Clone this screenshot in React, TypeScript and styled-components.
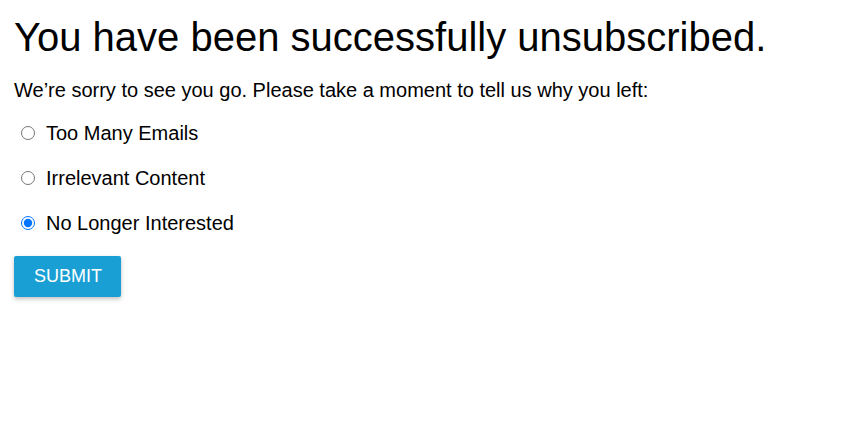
import React, { useState } from "react";
import styled, { createGlobalStyle } from "styled-components";

const GlobalStyle = createGlobalStyle`
  body {
    margin: 0;
    background: #ffffff;
    font-family: "Liberation Sans", Arial, sans-serif;
    color: #000000;
  }
`;

const Page = styled.div`
  padding: 14px 14px;
`;

const Title = styled.h1`
  margin: 0 0 18px 0;
  font-size: 40px;
  font-weight: normal;
  line-height: 46px;
`;

const Intro = styled.p`
  margin: 0 0 19px 0;
  font-size: 20px;
  line-height: 24px;
`;

const Options = styled.div`
  display: flex;
  flex-direction: column;
  gap: 21px;
  margin-bottom: 21px;
`;

const Option = styled.label`
  display: flex;
  align-items: center;
  font-size: 20px;
  line-height: 24px;
  cursor: pointer;
`;

const Radio = styled.input`
  margin: 0 11px 0 7px;
  width: 14px;
  height: 14px;
  accent-color: #0075ff;
`;

const SubmitButton = styled.button`
  display: block;
  height: 41px;
  padding: 0 19px 0 20px;
  border: none;
  border-radius: 2px;
  background: #1a9fd4;
  color: #ffffff;
  font-family: "Liberation Sans", Arial, sans-serif;
  font-size: 18px;
  box-shadow: 0 2px 4px rgba(0, 0, 0, 0.25);
  cursor: pointer;
`;

const reasons = ["Too Many Emails", "Irrelevant Content", "No Longer Interested"];

export default function App(): JSX.Element
{
  const [reason, setReason] = useState<string>("No Longer Interested");

  return (
    <Page>
      <GlobalStyle />
      <Title>You have been successfully unsubscribed.</Title>
      <Intro>We’re sorry to see you go. Please take a moment to tell us why you left:</Intro>
      <Options>
        {reasons.map(entry =>
          <Option key={entry}>
            <Radio type="radio" name="reason" checked={reason === entry} onChange={() => setReason(entry)}/>
            {entry}
          </Option>
        )}
      </Options>
      <SubmitButton>SUBMIT</SubmitButton>
    </Page>
  );
}
